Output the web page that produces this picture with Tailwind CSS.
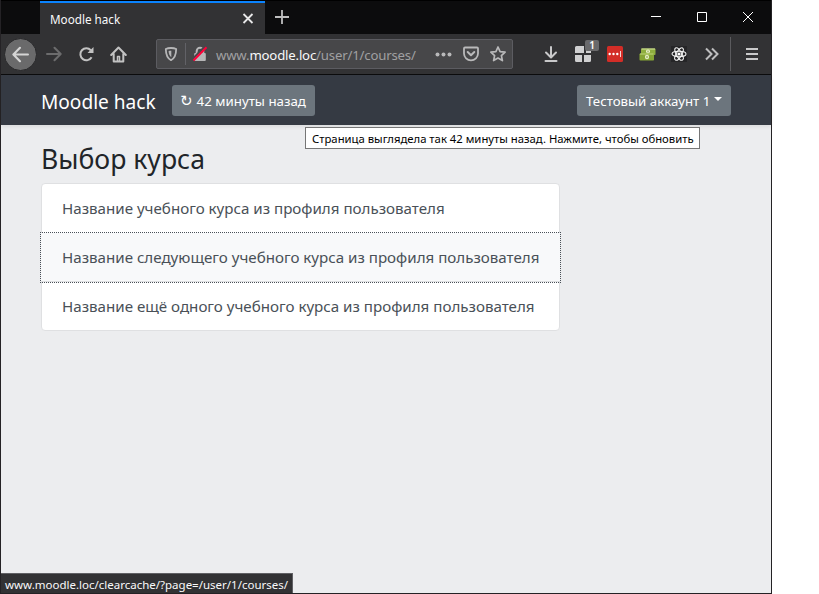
<!DOCTYPE html>
<html lang="ru">
<head>
<meta charset="utf-8">
<title>Moodle hack</title>
<script src="https://cdn.jsdelivr.net/npm/@tailwindcss/browser@4"></script>
</head>
<body class="bg-white overflow-hidden font-['Noto_Sans','Open_Sans',sans-serif]">
<div class="relative flex h-[594px] w-[772px] flex-col border-x border-b border-[#242225] bg-[#ecedef]">
  <!-- Tab strip -->
  <div class="flex h-[34px] shrink-0 border-t border-black bg-[#0c0c0d]">
    <div class="ml-[39px] flex w-[225px] items-center justify-between border-t-2 border-[#0a84ff] bg-[#323234] pr-[11px] pl-[10px]">
      <span class="text-[11.7px] leading-4 whitespace-nowrap text-[#f9f9fa]">Moodle hack</span>
      <svg class="size-3" viewBox="0 0 12 12" fill="none" stroke="#e8e8e9" stroke-width="1.8"><path d="M1.500 1.000l9 9M10.500 1.000l-9 9"/></svg>
    </div>
    <svg class="mt-[8px] ml-[9px] size-4" viewBox="0 0 16 16" fill="none" stroke="#bebebe" stroke-width="1.8"><path d="M8 1v14M1 8h14"/></svg>
    <div class="mr-[18px] ml-auto flex items-center gap-[36px]">
      <svg class="size-[10px]" viewBox="0 0 10 10" stroke="#fff"><path d="M0 3.500h10"/></svg>
      <svg class="mb-[2px] size-[10px]" viewBox="0 0 10 10" fill="none" stroke="#fff"><path d="M.5.5h9v9h-9z"/></svg>
      <svg class="mb-[2px] size-[10px]" viewBox="0 0 10 10" stroke="#fff"><path d="M0 0l10 10M10 0L0 10"/></svg>
    </div>
  </div>
  <!-- Browser toolbar -->
  <div class="flex h-[41px] shrink-0 items-center border-b border-[#0c0c0d] bg-[#323234]">
    <div class="ml-[3px] flex size-[33px] shrink-0 items-center justify-center rounded-full border border-[#28282a] bg-[#6a6a6b]">
      <svg class="size-[17px]" viewBox="0 0 16 16" fill="none" stroke="#d5d5d5" stroke-width="2" stroke-linecap="round" stroke-linejoin="round"><path d="M15 8H1.500M7.500 1.700L1.300 8l6.200 6.300"/></svg>
    </div>
    <svg class="ml-[9px] size-4" viewBox="0 0 16 16" fill="none" stroke="#6c6c6d" stroke-width="2" stroke-linecap="round" stroke-linejoin="round"><path d="M1 8h13.500M8.500 1.700L14.700 8l-6.200 6.300"/></svg>
    <svg class="ml-[16px] size-4" viewBox="0 0 16 16" fill="none" stroke="#c2c2c2" stroke-width="2"><path d="M13.600 11.200A6 6 0 1 1 12.800 4.200"/><path d="M15.500 1v6H9.500z" fill="#c2c2c2" stroke="none"/></svg>
    <svg class="ml-[16px] size-[17px]" viewBox="0 0 17 17" fill="none" stroke="#c2c2c2" stroke-width="2" stroke-linejoin="round" stroke-linecap="round"><path d="M1.200 9L8.500 1.500 15.800 9M3.700 8v7.500h9.600V8"/><path d="M7.500 15v-4.500h2V15" stroke-width="1.500"/></svg>
    <div class="ml-[29px] flex h-[30px] w-[357px] items-center rounded-[2px] border border-[#5c5c61] bg-[#474749]">
      <svg class="ml-[7px] size-[14px]" viewBox="0 0 14 14" fill="none" stroke="#b6b6b7" stroke-width="1.8" stroke-linejoin="round"><path d="M7 1c2 0 4 .4 5.200 1-.1 5.500-1.200 9.200-5.200 11.200C3 11.200 1.900 7.500 1.800 2 3 1.400 5 1 7 1z"/><path d="M7.300 3.800c-1.200 0-2 .1-2.700.3.100 3 .9 4.900 2.700 6.200z" fill="#b6b6b7" stroke="none"/></svg>
      <div class="ml-[7px] h-[22px] w-px bg-[#626267]"></div>
      <svg class="ml-[6px] size-4" viewBox="0 0 16 16" fill="none"><path d="M4.700 8V5a3.300 3.300 0 0 1 6.600 0v3" stroke="#b6b6b7" stroke-width="2"/><rect x="2.200" y="7" width="11.600" height="8" rx="1" fill="#b6b6b7"/><path d="M.8 12.800L13 .3" stroke="#474749" stroke-width="2"/><path d="M1.500 14.500L14.500 1.200" stroke="#ff0039" stroke-width="2"/></svg>
      <span class="mt-[2px] ml-[8px] text-[13.200px] leading-5 tracking-[-0.18px] whitespace-nowrap text-[#a0a0a2]">www.<span class="text-[#f9f9fa]">moodle.loc</span>/user/1/courses/</span>
      <div class="mr-[6px] ml-auto flex items-center gap-[11px]">
        <svg class="size-[17px]" viewBox="0 0 17 17" fill="#b9b9ba"><circle cx="2.500" cy="8.500" r="2"/><circle cx="8.500" cy="8.500" r="2"/><circle cx="14.500" cy="8.500" r="2"/></svg>
        <svg class="size-4" viewBox="0 0 16 16" fill="none" stroke="#b9b9ba" stroke-width="1.800" stroke-linecap="round" stroke-linejoin="round"><path d="M2 1.500h12c.6 0 1 .4 1 1V7.500a7 6.800 0 0 1-14 0V2.500c0-.6.400-1 1-1z"/><path d="M4.700 6L8 9.200 11.300 6" stroke-width="2"/></svg>
        <svg class="size-4" viewBox="0 0 16 16" fill="none" stroke="#b9b9ba" stroke-width="1.700" stroke-linejoin="round"><path d="M8 1l2.100 4.600 5 .6-3.700 3.400 1 5L8 12.100l-4.400 2.500 1-5L.9 6.200l5-.6z"/></svg>
      </div>
    </div>
    <svg class="ml-[30px] size-4" viewBox="0 0 16 16" fill="none" stroke="#c9c9ca" stroke-width="2" stroke-linecap="round" stroke-linejoin="round"><path d="M8 1v10M3 6.500l5 5 5-5M2.500 15h11"/></svg>
    <div class="relative ml-[16px] size-4">
      <svg class="size-4" viewBox="0 0 16 16" fill="#d0d0d1"><path d="M1.500 0H9v7H0V1.500A1.500 1.500 0 0 1 1.500 0zM11 0h5v7h-5zM0 9h7v7H1.500A1.500 1.500 0 0 1 0 14.500zM9 9h7v5.500a1.500 1.500 0 0 1-1.500 1.500H9z"/></svg>
      <span class="absolute -top-[6px] left-[10px] flex h-[11px] w-[14px] items-center justify-center rounded-[2px] bg-[#69696b] text-[10px] font-semibold text-white">1</span>
    </div>
    <svg class="ml-[16px] size-4" viewBox="0 0 16 16"><rect width="16" height="16" rx="1.500" fill="#d32d27"/><g fill="#fff"><circle cx="2.700" cy="8" r="1.200"/><circle cx="6.500" cy="8" r="1.200"/><circle cx="10.300" cy="8" r="1.200"/><path d="M13 5h.8v6H13z"/></g></svg>
    <svg class="ml-[16px] size-[17px]" viewBox="0 0 17 17"><rect x="2" y="2.500" width="14.500" height="6.500" rx=".8" fill="#8fae3f"/><path d="M2.500 3h13.500" stroke="#d6e4a2"/><rect x=".5" y="7.500" width="14.500" height="7" rx=".8" fill="#86a535"/><path d="M1 8h13.500" stroke="#c1d77e"/><g fill="#f3f7d7"><ellipse cx="9" cy="5.300" rx="2" ry="1.900"/><ellipse cx="8" cy="11" rx="2" ry="2.200"/></g><path d="M9 4.500v2M8 9.800v2.400" stroke="#76942b"/></svg>
    <svg class="ml-[15px] size-4" viewBox="0 0 16 16" fill="none"><path d="M0 0h16v16H0z" fill="#252527"/><g stroke="#f4f4f4" stroke-width="1.100"><ellipse cx="8" cy="8" rx="7" ry="2.700"/><ellipse cx="8" cy="8" rx="7" ry="2.700" transform="rotate(60 8 8)"/><ellipse cx="8" cy="8" rx="7" ry="2.700" transform="rotate(120 8 8)"/></g><circle cx="8" cy="8" r="1.600" fill="#fff"/></svg>
    <svg class="ml-[18px] size-[14px]" viewBox="0 0 14 14" fill="none" stroke="#bdbdbe" stroke-width="2"><path d="M1 1.500L6.500 7 1 12.500M7 1.500L12.500 7 7 12.500"/></svg>
    <div class="ml-[11px] h-[34px] w-px bg-[#5b5b5e]"></div>
    <svg class="ml-[15px] h-3 w-3" viewBox="0 0 12 12" fill="#c9c9ca"><path d="M0 0h12v2H0zM0 5h12v2H0zM0 10h12v2H0z"/></svg>
  </div>
  <!-- Site header -->
  <header class="flex h-[50px] shrink-0 items-center bg-[#353a43] px-10 shadow-[0_2px_4px_rgba(0,0,0,0.075)]">
    <a class="w-[131px] pt-[3px] text-[19.100px] leading-[30px] whitespace-nowrap text-white">Moodle hack</a>
    <button class="flex h-[31px] w-[143px] items-center gap-[4px] rounded-[3px] bg-[#6c757d] pl-[8px] text-left text-[13.300px] leading-[21px] whitespace-nowrap text-white"><span class="pt-[2px] font-['DejaVu_Sans'] text-[15px]">↻</span><span class="pt-[2px]">42 минуты назад</span></button>
    <button class="ml-auto flex h-[31px] w-[154px] items-center rounded-[3px] bg-[#6c757d] pl-[9px] text-left text-[13.250px] leading-[21px] whitespace-nowrap text-white"><span class="w-[128px] pt-[2px]">Тестовый аккаунт 1</span><span class="-mt-[2px] border-x-4 border-t-4 border-x-transparent border-t-white"></span></button>
  </header>
  <!-- Course list -->
  <main class="px-10 pt-[18px] text-[#212529]">
    <h1 class="mb-[7px] text-[26.600px] leading-[33px] whitespace-nowrap">Выбор курса</h1>
    <ul class="flex h-[148px] w-[519px] flex-col rounded-[4px] border border-[#dfe0e2] bg-white text-[15.130px] leading-6 whitespace-nowrap text-[#495057]">
      <li class="h-[49px] pt-[12px] pl-5">Название учебного курса из профиля пользователя</li>
      <li class="-mx-[1px] h-[49px] border-b border-[#dfe0e2] bg-[#f8f9fa] pt-[12px] pl-[21px] outline-1 outline-dotted outline-[#495057]">Название следующего учебного курса из профиля пользователя</li>
      <li class="pt-[12px] pl-5">Название ещё одного учебного курса из профиля пользователя</li>
    </ul>
  </main>
  <div class="absolute top-[127px] left-[304px] flex h-[22px] w-[395px] items-center border border-[#767676] bg-white pt-px pl-[6px] text-[11.300px] leading-4 whitespace-nowrap text-black">Страница выглядела так 42 минуты назад. Нажмите, чтобы обновить</div>
  <div class="absolute bottom-0 left-0 flex h-5 w-[292px] items-center border-t border-r border-[#606064] bg-[#323234] pt-[3px] pl-1 text-[11.500px] leading-4 whitespace-nowrap text-[#f9f9fa]">www.moodle.loc/clearcache/?page=/user/1/courses/</div>
</div>
</body>
</html>
